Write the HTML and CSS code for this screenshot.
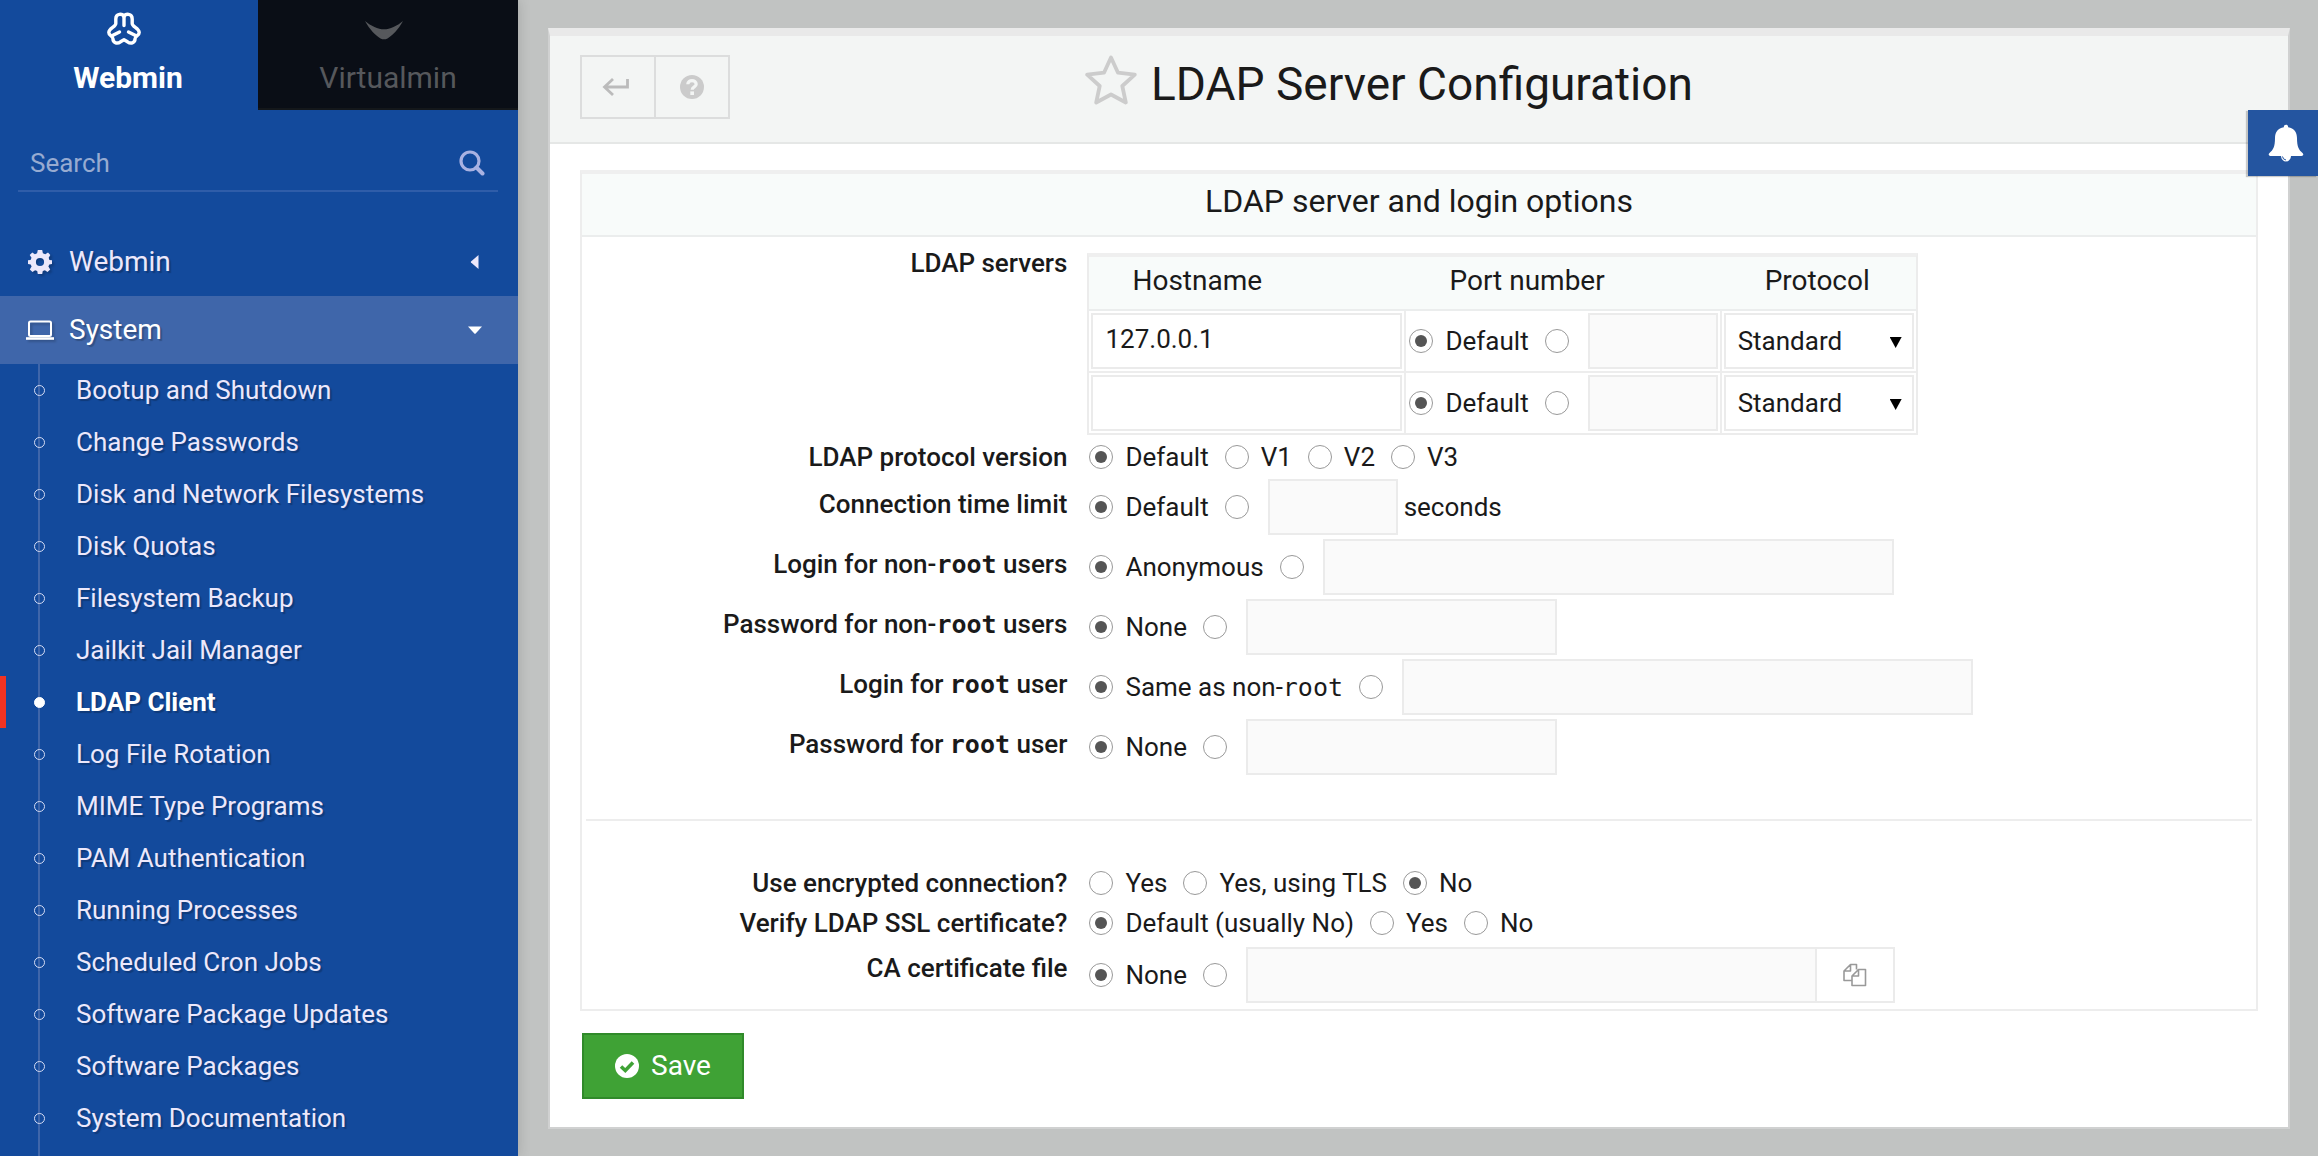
FILE: index.html
```html
<!DOCTYPE html>
<html lang="en">
<head>
<meta charset="utf-8">
<title>LDAP Server Configuration</title>
<link rel="stylesheet" href="styles.css">
</head>
<body>
<aside class="sidebar">
  <nav class="tabs" aria-label="Product">
    <a class="tab tab-active" href="#webmin">
      <svg class="tab-icon" width="36" height="34" viewBox="0 0 36 34" fill="none" stroke="currentColor" stroke-width="3.4" stroke-linecap="round" stroke-linejoin="round">
        <path d="M18 4.600C16.500 1.500 9.800 1 9.800 7V11.500C9.800 15 3 16 2.800 20.500C2.700 23.500 6.800 23.500 6.900 26.500C7 31.500 11.500 32 14.500 29.800L18 27.800L21.500 29.800C24.500 32 29 31.500 29.100 26.500C29.200 23.500 33.300 23.500 33.200 20.500C33 16 26.200 15 26.200 11.500V7C26.200 1 19.500 1.500 18 4.600Z"/>
        <path d="M18 4.600V13.500M6.500 23.500L13.500 20M29.500 23.500L22.500 20"/>
      </svg>
      <span class="tab-name">Webmin</span>
    </a>
    <a class="tab tab-other" href="#virtualmin">
      <svg class="tab-icon" width="40" height="34" viewBox="0 0 40 34" fill="currentColor">
        <path d="M1 9C7 14 14 17.300 20 17.300S33 14 39 9C34.500 17.500 28 24 23.500 26.400Q20 28.200 16.500 26.400C12 24 5.500 17.500 1 9Z"/>
      </svg>
      <span class="tab-name">Virtualmin</span>
    </a>
  </nav>

  <form class="search">
    <input class="search-input" type="search" placeholder="Search" aria-label="Search">
    <button class="search-button" type="submit" aria-label="Search">
      <svg width="26" height="26" viewBox="0 0 26 26" fill="none" stroke="currentColor">
        <circle cx="11" cy="11" r="9" stroke-width="3.200"/>
        <path d="M17.500 17.500L23.500 23.500" stroke-width="4" stroke-linecap="round"/>
      </svg>
    </button>
  </form>

  <nav class="menu" aria-label="Modules">
    <a class="group" href="#webmin-group">
      <svg class="group-icon" width="26" height="26" viewBox="0 0 26 26" fill="currentColor">
        <path fill-rule="evenodd" d="M10.800 1H15.200L15.900 4.300L18.300 5.300L21 3.400L23.300 6L21.700 8.700L22.400 10.900L25 11.300V14.900L22.300 15.500L21.400 17.600L23.200 20.400L20.500 22.900L17.900 21.200L15.800 22L15.200 25H10.800L10.200 22L8.100 21.200L5.500 22.900L2.800 20.400L4.600 17.600L3.700 15.500L1 14.900V11.300L3.600 10.900L4.500 8.700L2.700 6L5.300 3.400L7.900 5.300L10.100 4.300ZM13 8.900A4.100 4.100 0 1 0 13 17.100A4.100 4.100 0 1 0 13 8.900Z"/>
      </svg>
      <span class="group-name">Webmin</span>
      <svg class="caret" width="14" height="14" viewBox="0 0 14 14" fill="currentColor"><path d="M10.500 0V14L3 7.600Q2.500 7 3 6.400Z"/></svg>
    </a>
    <a class="group group-open" href="#system-group">
      <svg class="group-icon" width="28" height="26" viewBox="0 0 28 26" fill="none" stroke="currentColor">
        <rect x="3" y="4.500" width="22" height="14.500" rx="1.500" stroke-width="2"/>
        <path d="M0 21.500H28" stroke-width="2.600"/>
      </svg>
      <span class="group-name">System</span>
      <svg class="caret" width="14" height="14" viewBox="0 0 14 14" fill="currentColor"><path d="M0 3.500H14L7.700 10.500Q7 11.200 6.300 10.500Z"/></svg>
    </a>
    <ul class="items">
      <li><a class="item" href="#bootup">Bootup and Shutdown</a></li>
      <li><a class="item" href="#passwords">Change Passwords</a></li>
      <li><a class="item" href="#filesystems">Disk and Network Filesystems</a></li>
      <li><a class="item" href="#quotas">Disk Quotas</a></li>
      <li><a class="item" href="#backup">Filesystem Backup</a></li>
      <li><a class="item" href="#jailkit">Jailkit Jail Manager</a></li>
      <li><a class="item item-current" href="#ldap" aria-current="page">LDAP Client</a></li>
      <li><a class="item" href="#logs">Log File Rotation</a></li>
      <li><a class="item" href="#mime">MIME Type Programs</a></li>
      <li><a class="item" href="#pam">PAM Authentication</a></li>
      <li><a class="item" href="#processes">Running Processes</a></li>
      <li><a class="item" href="#cron">Scheduled Cron Jobs</a></li>
      <li><a class="item" href="#updates">Software Package Updates</a></li>
      <li><a class="item" href="#packages">Software Packages</a></li>
      <li><a class="item" href="#docs">System Documentation</a></li>
    </ul>
  </nav>
</aside>

<main class="main">
  <div class="page">
    <header class="page-head">
      <div class="tools">
        <button class="tool tool-return" type="button" aria-label="Return">
          <svg width="28" height="20" viewBox="0 0 28 20" fill="none" stroke="#bbb" stroke-width="2.800"><path d="M25.500 2V10H2.500M11 2L2.500 10L11 18"/></svg>
        </button>
        <button class="tool" type="button" aria-label="Help">
          <svg width="24" height="24" viewBox="0 0 24 24"><circle cx="12" cy="12" r="12" fill="#cbcbcb"/><path d="M7.800 9.300C7.800 4.500 16.200 4.500 16.200 9.300C16.200 12 12.200 11.800 12.200 14.800" fill="none" stroke="#f3f5f4" stroke-width="3.200"/><path d="M10.300 16.400H14V20H10.300Z" fill="#f3f5f4"/></svg>
        </button>
      </div>
      <h1 class="title">
        <svg width="52" height="50" viewBox="0 0 52 50" fill="none" stroke="#ccc" stroke-width="3.800" stroke-linejoin="round"><path d="M26 2.500L33 17.700L49.800 19.600L37.300 31L40.800 47.500L26 39.500L11.200 47.500L14.700 31L2.200 19.600L19 17.700Z"/></svg>
        <span>LDAP Server Configuration</span>
      </h1>
    </header>

    <form class="content">
      <section class="panel">
        <h2 class="panel-head">LDAP server and login options</h2>
        <div class="panel-body">
          <div class="row">
            <span class="label label-top">LDAP servers</span>
            <table class="servers">
              <thead><tr><th>Hostname</th><th>Port number</th><th>Protocol</th></tr></thead>
              <tbody>
                <tr>
                  <td><input class="field field-m" type="text" value="127.0.0.1" aria-label="Hostname 1"></td>
                  <td><div class="controls">
                    <label class="choice"><input type="radio" name="port1" checked>Default</label>
                    <span class="choice-field"><input type="radio" name="port1" aria-label="Custom port 1"><input class="field field-s" type="text" aria-label="Port 1" disabled></span>
                  </div></td>
                  <td><span class="select"><select aria-label="Protocol 1"><option>Standard</option></select></span></td>
                </tr>
                <tr>
                  <td><input class="field field-m" type="text" aria-label="Hostname 2"></td>
                  <td><div class="controls">
                    <label class="choice"><input type="radio" name="port2" checked>Default</label>
                    <span class="choice-field"><input type="radio" name="port2" aria-label="Custom port 2"><input class="field field-s" type="text" aria-label="Port 2" disabled></span>
                  </div></td>
                  <td><span class="select"><select aria-label="Protocol 2"><option>Standard</option></select></span></td>
                </tr>
              </tbody>
            </table>
          </div>

          <div class="row" role="radiogroup" aria-labelledby="l-version">
            <span class="label" id="l-version">LDAP protocol version</span>
            <div class="controls controls-text">
              <label class="choice"><input type="radio" name="version" checked>Default</label>
              <label class="choice"><input type="radio" name="version">V1</label>
              <label class="choice"><input type="radio" name="version">V2</label>
              <label class="choice"><input type="radio" name="version">V3</label>
            </div>
          </div>

          <div class="row" role="radiogroup" aria-labelledby="l-time">
            <span class="label label-field" id="l-time">Connection time limit</span>
            <div class="controls">
              <label class="choice"><input type="radio" name="time" checked>Default</label>
              <span class="choice-field"><input type="radio" name="time" aria-label="Custom limit"><input class="field field-s" id="seconds" type="text" disabled></span>
              <label class="unit" for="seconds">seconds</label>
            </div>
          </div>

          <div class="row" role="radiogroup" aria-labelledby="l-login">
            <span class="label label-field" id="l-login">Login for non-<code>root</code> users</span>
            <div class="controls">
              <label class="choice"><input type="radio" name="login" checked>Anonymous</label>
              <span class="choice-field"><input type="radio" name="login" aria-label="Custom login"><input class="field field-l" type="text" aria-label="Login" disabled></span>
            </div>
          </div>

          <div class="row" role="radiogroup" aria-labelledby="l-pass">
            <span class="label label-field" id="l-pass">Password for non-<code>root</code> users</span>
            <div class="controls">
              <label class="choice"><input type="radio" name="pass" checked>None</label>
              <span class="choice-field"><input type="radio" name="pass" aria-label="Custom password"><input class="field field-m" type="text" aria-label="Password" disabled></span>
            </div>
          </div>

          <div class="row" role="radiogroup" aria-labelledby="l-rlogin">
            <span class="label label-field" id="l-rlogin">Login for <code>root</code> user</span>
            <div class="controls">
              <label class="choice"><input type="radio" name="rlogin" checked><span>Same as non-<code>root</code></span></label>
              <span class="choice-field"><input type="radio" name="rlogin" aria-label="Custom root login"><input class="field field-l" type="text" aria-label="Root login" disabled></span>
            </div>
          </div>

          <div class="row" role="radiogroup" aria-labelledby="l-rpass">
            <span class="label label-field" id="l-rpass">Password for <code>root</code> user</span>
            <div class="controls">
              <label class="choice"><input type="radio" name="rpass" checked>None</label>
              <span class="choice-field"><input type="radio" name="rpass" aria-label="Custom root password"><input class="field field-m" type="text" aria-label="Root password" disabled></span>
            </div>
          </div>

          <hr class="rule">

          <div class="row" role="radiogroup" aria-labelledby="l-tls">
            <span class="label" id="l-tls">Use encrypted connection?</span>
            <div class="controls controls-text">
              <label class="choice"><input type="radio" name="tls">Yes</label>
              <label class="choice"><input type="radio" name="tls">Yes, using TLS</label>
              <label class="choice"><input type="radio" name="tls" checked>No</label>
            </div>
          </div>

          <div class="row" role="radiogroup" aria-labelledby="l-verify">
            <span class="label" id="l-verify">Verify LDAP SSL certificate?</span>
            <div class="controls controls-text">
              <label class="choice"><input type="radio" name="verify" checked>Default (usually No)</label>
              <label class="choice"><input type="radio" name="verify">Yes</label>
              <label class="choice"><input type="radio" name="verify">No</label>
            </div>
          </div>

          <div class="row row-file" role="radiogroup" aria-labelledby="l-ca">
            <span class="label label-file" id="l-ca">CA certificate file</span>
            <div class="controls">
              <label class="choice"><input type="radio" name="ca" checked>None</label>
              <span class="choice-field"><input type="radio" name="ca" aria-label="Custom file"><span class="file"><input class="field field-l" type="text" aria-label="Certificate file" disabled><button class="browse" type="button" aria-label="Browse files">
                <svg width="24" height="24" viewBox="0 0 24 24" fill="none" stroke="#999" stroke-width="1.600" stroke-linejoin="round"><path d="M9 17.500H1V8L7.500 1.500H13.500V6.500M7.500 1.500V8H1M9 22.500V13L15.500 6.500H22.500V22.500ZM15.500 6.500V13H9"/></svg>
              </button></span></span>
            </div>
          </div>
        </div>
      </section>
      <button class="save" type="submit">
        <svg width="24" height="24" viewBox="0 0 24 24"><circle cx="12" cy="12" r="12" fill="#fff"/><path d="M6 12.500L10.300 16.500L18 8.500" fill="none" stroke="#3fa235" stroke-width="3.600"/></svg>
        Save
      </button>
    </form>
  </div>
</main>

<button class="bell" type="button" aria-label="Notifications">
  <svg width="36" height="38" viewBox="0 0 36 38" fill="#fff"><path d="M15.800 3.200C15.800 0 20.200 0 20.200 3.200C26 4.200 29 8 29 14C29 23 31 26 34.500 29C36 30.500 35.200 32 33.500 32H23C22.500 39.300 13.500 39.300 13 32H2.500C.8 32 0 30.500 1.500 29C5 26 7 23 7 14C7 8 10 4.200 15.800 3.200Z"/><path d="M14.500 32.500Q14.800 35.500 18 36" fill="none" stroke="#2455a0" stroke-width="1"/></svg>
</button>
</body>
</html>
```
FILE: styles.css
```css
*, ::before, ::after { box-sizing: border-box; }

body {
  margin: 0;
  min-height: 100vh;
  display: flex;
  background: #c1c3c2;
  color: #1a1a1a;
  font-family: Roboto, "Liberation Sans", sans-serif;
  font-size: 26px;
  line-height: 32px;
}

a { color: inherit; text-decoration: none; }
button, input, select { font: inherit; color: inherit; }
button { padding: 0; border: 0; background: none; }
svg { display: block; flex: none; }
code { font-family: "DejaVu Sans Mono", monospace; font-size: 25px; }

/* Sidebar */
.sidebar {
  flex: none;
  width: 518px;
  display: flex;
  flex-direction: column;
  background: #134a9c;
  color: #ece8fb;
  box-shadow: 0 0 12px rgba(0, 0, 0, .16);
}
.tabs { display: grid; grid-template-columns: 258px 1fr; }
.tab {
  height: 110px;
  padding-top: 12px;
  display: flex;
  flex-direction: column;
  align-items: center;
  gap: 12px;
  font-size: 30px;
  line-height: 40px;
}
.tab-icon { margin-right: 8px; }
.tab-active { padding-right: 2px; color: #fff; font-weight: 700; }
.tab-other { background: #0a0e16; color: #56585c; border-bottom: 2px solid #14171a; }

.search {
  display: flex;
  align-items: center;
  height: 60px;
  margin: 22px 20px 36px 18px;
  padding: 4px 13px 0 12px;
  border-bottom: 2px solid #2f5da9;
}
.search-input {
  flex: 1;
  min-width: 0;
  padding: 0;
  border: 0;
  outline: 0;
  background: none;
}
.search-input::placeholder { color: #97abd1; opacity: 1; }
.search-button { color: #a9b2e2; }

.menu { flex: 1; display: flex; flex-direction: column; text-shadow: 2px 2px 1px rgba(0, 0, 0, .22); }
.group {
  display: flex;
  align-items: center;
  height: 68px;
  padding: 0 36px 0 26px;
  font-size: 28px;
}
.group-icon { width: 28px; filter: drop-shadow(2px 2px 1px rgba(0, 0, 0, .2)); }
.group-name { flex: 1; padding-left: 15px; }
.group-open { background: #3f66aa; color: #fff; }
.items {
  flex: 1;
  margin: 0;
  padding: 0;
  list-style: none;
  background: linear-gradient(#3f66aa, #3f66aa) 38px 0 / 2px 100% no-repeat;
}
.item { display: flex; align-items: center; height: 52px; padding-left: 34px; }
.item::before {
  content: "";
  width: 11px;
  height: 11px;
  margin-right: 31px;
  border: 1px solid #d5dcf4;
  border-radius: 50%;
}
.item-current {
  padding-left: 28px;
  border-left: 6px solid #f03323;
  color: #fff;
  font-weight: 700;
}
.item-current::before { background: #fff; border-color: #fff; }

/* Page */
.main { flex: 1; min-width: 0; padding: 28px 28px 27px 30px; }
.page {
  border: 2px solid #d0d1d1;
  border-top: 8px solid #e9e9e9;
  background: #fff;
}
.page-head {
  display: grid;
  grid-template-columns: 1fr auto 1fr;
  align-items: start;
  height: 108px;
  padding: 19px 30px 0;
  background: #f3f5f4;
  border-bottom: 2px solid #e5e7e6;
}
.tools { display: flex; }
.tool {
  display: grid;
  place-items: center;
  width: 76px;
  height: 64px;
  border: 2px solid #dcdddd;
}
.tool-return { padding-right: 4px; }
.tool + .tool { margin-left: -2px; }
.title {
  display: flex;
  gap: 14px;
  margin: 0;
  padding-right: 60px;
  font-size: 46px;
  line-height: 58px;
  font-weight: 400;
}
.content { padding: 26px 30px 28px; }

.panel { border: 2px solid #ededed; border-top: 4px solid #efefef; }
.panel-head {
  margin: 0;
  height: 63px;
  background: #f8fbfa;
  border-bottom: 2px solid #ebeded;
  font-size: 32px;
  line-height: 54px;
  font-weight: 400;
  text-align: center;
}
.panel-body { padding: 14px 0 4px; }
.row {
  display: grid;
  grid-template-columns: 29% 1fr;
  column-gap: 20px;
  align-items: start;
}
.row-file { padding-top: 2px; }
.label {
  padding-top: 8px;
  font-weight: 500;
  line-height: 24px;
  text-align: right;
}
.label code { font-weight: 700; }
.label-top { padding-top: 0; }
.label-field { padding-top: 15px; }
.label-file { padding-top: 11px; }
.rule { margin: 42px 4px; border: 0; border-top: 2px solid #ededed; }

.controls {
  display: flex;
  align-items: center;
  gap: 16px;
  padding: 2px;
}
.controls-text { height: 40px; }
.choice { display: flex; align-items: center; gap: 12px; }
.choice-field { display: flex; align-items: center; gap: 19px; }
.unit { margin-left: -10px; }

input[type="radio"] {
  appearance: none;
  flex: none;
  display: grid;
  place-items: center;
  width: 24px;
  height: 24px;
  margin: 0;
  border: 1px solid #999;
  border-radius: 50%;
  background: #fff;
}
input[type="radio"]:checked::before {
  content: "";
  width: 12px;
  height: 12px;
  border-radius: 50%;
  background: #555;
}

.field {
  display: block;
  height: 56px;
  padding: 0 12px 4px;
  border: 2px solid #ebebeb;
  border-radius: 0;
  background: #fff;
}
.field:disabled { background: #fafafa; }
.field-s { width: 130px; }
.field-m { width: 311px; }
.field-l { width: 571px; }

.servers { justify-self: start; margin: 2px 0; border-collapse: separate; border-spacing: 0; border: 2px solid #ececec; border-top: 4px solid #efefef; }
.servers th {
  height: 54px;
  padding: 0 0 4px 43px;
  background: #f8fbfa;
  border-bottom: 2px solid #ebeded;
  font-size: 28px;
  font-weight: 400;
  text-align: left;
}
.servers td { padding: 2px; border-bottom: 2px solid #ededed; border-right: 2px solid #ededed; }
.servers td:last-child { border-right: 0; }
.servers tr:last-child td { border-bottom: 0; }
.servers .controls { padding: 0 0 0 1px; }

.select { position: relative; display: block; width: 190px; }
.select select {
  appearance: none;
  display: block;
  width: 100%;
  height: 56px;
  padding: 0 12px;
  border: 2px solid #ebebeb;
  border-radius: 0;
  background: #fff;
}
.select::after {
  content: "";
  position: absolute;
  right: 12px;
  top: 24px;
  width: 12px;
  height: 11px;
  background: #000;
  clip-path: polygon(0 0, 100% 0, 50% 100%);
  pointer-events: none;
}

.file { display: flex; }
.browse {
  display: grid;
  place-items: center;
  width: 80px;
  height: 56px;
  margin-left: -2px;
  border: 2px solid #ebebeb;
  background: #fff;
}

.save {
  display: flex;
  align-items: center;
  justify-content: center;
  gap: 12px;
  width: 162px;
  height: 66px;
  margin: 22px 0 0 2px;
  border: 2px solid #308a2a;
  background: #3fa235;
  color: #fff;
  font-size: 28px;
}

.bell {
  position: absolute;
  top: 110px;
  right: 0;
  display: grid;
  place-items: center;
  width: 70px;
  height: 66px;
  padding-left: 6px;
  background: #2455a0;
  box-shadow: -2px 1px 1px rgba(0, 0, 0, .2);
}
```
